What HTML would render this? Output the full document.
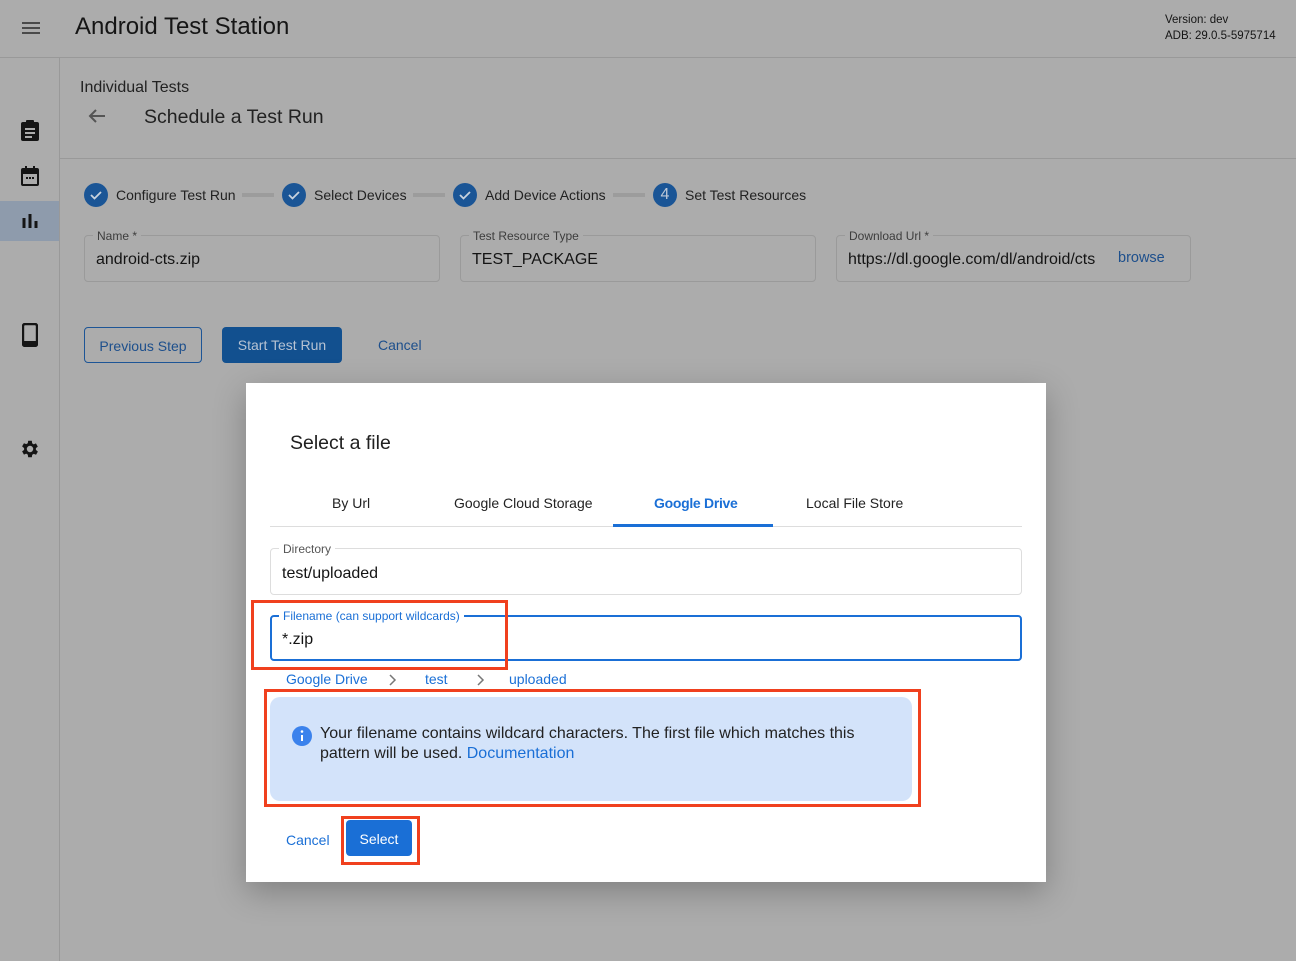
<!DOCTYPE html>
<html><head><meta charset="utf-8"><style>
*{box-sizing:border-box;margin:0;padding:0}
body{width:1296px;height:961px;background:#acacac;font-family:"Liberation Sans",Arial,sans-serif;position:relative;overflow:hidden;color:#141414}
.a{position:absolute;white-space:nowrap}
.fld{position:absolute;border:1px solid #9a9a9a;border-radius:4px}
.lbl{position:absolute;top:-7px;left:8px;background:#acacac;padding:0 4px;font-size:12px;color:#3d3d3d}
.circ{position:absolute;width:24px;height:24px;border-radius:50%;background:#1a5596;color:#bcc8d8;font-size:16px;text-align:center;line-height:24px}
.bar{position:absolute;height:4px;background:#9c9c9c;top:193px}
.stp{position:absolute;top:187px;font-size:14px;color:#222}
</style></head><body>
<div class="a" style="left:0;top:57px;width:1296px;height:1px;background:#999"></div>
<div class="a" style="left:59px;top:58px;width:1px;height:903px;background:#999"></div>
<svg class="a" style="left:21px;top:20px" width="20" height="16"><path d="M1 3h18M1 8h18M1 13h18" stroke="#4a4a4a" stroke-width="2"/></svg>
<div class="a" style="left:75px;top:13px;font-size:24px;color:#151515">Android Test Station</div>
<div class="a" style="left:1165px;top:12px;font-size:11.5px;line-height:16px;color:#151515">Version: dev<br>ADB: 29.0.5-5975714</div>
<svg class="a" style="left:21px;top:120px" width="18" height="21" viewBox="0 0 18 21"><rect x="0" y="2" width="18" height="19" rx="2" fill="#151515"/><rect x="5" y="0" width="8" height="5" rx="1" fill="#151515"/><path d="M4 9h10M4 13h10M4 17h7" stroke="#acacac" stroke-width="2"/></svg>
<svg class="a" style="left:21px;top:166px" width="18" height="20" viewBox="0 0 18 20"><rect x="1" y="3" width="16" height="16" rx="1" fill="none" stroke="#151515" stroke-width="2"/><path d="M1 4h16v4H1z" fill="#151515"/><path d="M5 0v4M13 0v4" stroke="#151515" stroke-width="2"/><path d="M5 12h2M8 12h2M11 12h2" stroke="#151515" stroke-width="2"/></svg>
<div class="a" style="left:0;top:201px;width:59px;height:40px;background:#8e9bac"></div>
<svg class="a" style="left:22px;top:212px" width="16" height="16"><path d="M2 6v10M8 2v14M14 9v7" stroke="#151515" stroke-width="3"/></svg>
<svg class="a" style="left:22px;top:323px" width="16" height="24"><rect x="1" y="1" width="14" height="22" rx="2" fill="none" stroke="#151515" stroke-width="2.4"/><rect x="2" y="18" width="12" height="4" fill="#151515"/></svg>
<svg class="a" style="left:19px;top:438px" width="22" height="22" viewBox="0 0 24 24"><path fill="#151515" d="M19.4 13a7.5 7.5 0 0 0 0-2l2.1-1.6-2-3.5-2.5 1a7 7 0 0 0-1.7-1L15 3h-4l-.4 2.7a7 7 0 0 0-1.7 1l-2.5-1-2 3.5L6.6 11a7.5 7.5 0 0 0 0 2l-2.2 1.6 2 3.5 2.5-1a7 7 0 0 0 1.7 1L11 21h4l.4-2.7a7 7 0 0 0 1.7-1l2.5 1 2-3.5zM13 15.5A3.5 3.5 0 1 1 13 8.5a3.5 3.5 0 0 1 0 7z" transform="translate(-1 0)"/></svg>
<div class="a" style="left:80px;top:79px;font-size:16px;color:#222">Individual Tests</div>
<svg class="a" style="left:88px;top:108px" width="18" height="16"><path d="M17 8H2M8 2L2 8l6 6" stroke="#555" stroke-width="2" fill="none"/></svg>
<div class="a" style="left:144px;top:106px;font-size:19.5px;color:#222">Schedule a Test Run</div>
<div class="a" style="left:60px;top:158px;width:1236px;height:1px;background:#999"></div>
<div class="circ" style="left:84px;top:183px"><svg width="24" height="24"><path d="M7 12l3.5 3.5L17 9" stroke="#c8d2de" stroke-width="1.8" fill="none"/></svg></div>
<div class="stp" style="left:116px">Configure Test Run</div>
<div class="bar" style="left:242px;width:32px"></div>
<div class="circ" style="left:282px;top:183px"><svg width="24" height="24"><path d="M7 12l3.5 3.5L17 9" stroke="#c8d2de" stroke-width="1.8" fill="none"/></svg></div>
<div class="stp" style="left:314px">Select Devices</div>
<div class="bar" style="left:413px;width:32px"></div>
<div class="circ" style="left:453px;top:183px"><svg width="24" height="24"><path d="M7 12l3.5 3.5L17 9" stroke="#c8d2de" stroke-width="1.8" fill="none"/></svg></div>
<div class="stp" style="left:485px">Add Device Actions</div>
<div class="bar" style="left:613px;width:32px"></div>
<div class="circ" style="left:653px;top:183px">4</div>
<div class="stp" style="left:685px">Set Test Resources</div>
<div class="fld" style="left:84px;top:235px;width:356px;height:47px"><span class="lbl">Name *</span><span class="a" style="left:11px;top:15px;font-size:16px">android-cts.zip</span></div>
<div class="fld" style="left:460px;top:235px;width:356px;height:47px"><span class="lbl">Test Resource Type</span><span class="a" style="left:11px;top:15px;font-size:16px">TEST_PACKAGE</span></div>
<div class="fld" style="left:836px;top:235px;width:355px;height:47px"><span class="lbl">Download Url *</span><span class="a" style="left:11px;top:15px;font-size:16px;width:253px;overflow:hidden">https://dl.google.com/dl/android/cts</span><span class="a" style="left:281px;top:14px;font-size:14.5px;color:#1d4f8c">browse</span></div>
<div class="a" style="left:84px;top:327px;width:118px;height:36px;border:1px solid #1d5596;border-radius:4px;color:#1d4f8c;font-size:14px;text-align:center;line-height:36px">Previous Step</div>
<div class="a" style="left:222px;top:327px;width:120px;height:36px;background:#12508f;border-radius:4px;color:#b7c3d3;font-size:14px;text-align:center;line-height:37px">Start Test Run</div>
<div class="a" style="left:378px;top:337px;font-size:14px;color:#1d4f8c">Cancel</div>
<div class="a" style="left:246px;top:383px;width:800px;height:499px;background:#fff;box-shadow:0 10px 30px rgba(0,0,0,.25)">
  <div class="a" style="left:44px;top:49px;font-size:19.5px;color:#202020">Select a file</div>
  <div class="a" style="left:86px;top:112px;font-size:14px;color:#222">By Url</div>
  <div class="a" style="left:208px;top:112px;font-size:14px;color:#222">Google Cloud Storage</div>
  <div class="a" style="left:408px;top:112px;font-size:14px;color:#1a6fd6;font-weight:bold;letter-spacing:-.3px">Google Drive</div>
  <div class="a" style="left:560px;top:112px;font-size:14px;color:#222">Local File Store</div>
  <div class="a" style="left:24px;top:143px;width:752px;height:1px;background:#ddd"></div>
  <div class="a" style="left:367px;top:141px;width:160px;height:3px;background:#1a6fd6"></div>
  <div class="a" style="left:24px;top:165px;width:752px;height:47px;border:1px solid #ddd;border-radius:4px">
    <span class="a" style="top:-7px;left:8px;background:#fff;padding:0 4px;font-size:12px;color:#555">Directory</span>
    <span class="a" style="left:11px;top:16px;font-size:16px">test/uploaded</span></div>
  <div class="a" style="left:24px;top:232px;width:752px;height:46px;border:2px solid #1a6fd6;border-radius:4px">
    <span class="a" style="top:-8px;left:7px;background:#fff;padding:0 4px;font-size:12px;color:#1a6fd6">Filename (can support wildcards)</span>
    <span class="a" style="left:10px;top:14px;font-size:16px">*.zip</span></div>
  <div class="a" style="left:5px;top:217px;width:257px;height:70px;border:3px solid #f0401e"></div>
  <div class="a" style="left:40px;top:288px;font-size:14px;color:#1a6fd6">Google Drive</div>
  <svg class="a" style="left:141px;top:290px" width="10" height="14"><path d="M3 2l5 5-5 5" stroke="#777" stroke-width="1.5" fill="none"/></svg>
  <div class="a" style="left:179px;top:288px;font-size:14px;color:#1a6fd6">test</div>
  <svg class="a" style="left:229px;top:290px" width="10" height="14"><path d="M3 2l5 5-5 5" stroke="#777" stroke-width="1.5" fill="none"/></svg>
  <div class="a" style="left:263px;top:288px;font-size:14px;color:#1a6fd6">uploaded</div>
  <div class="a" style="left:24px;top:314px;width:642px;height:104px;background:#d3e3fa;border-radius:10px"></div>
  <div class="a" style="left:18px;top:306px;width:657px;height:118px;border:3px solid #f0401e"></div>
  <svg class="a" style="left:45px;top:342px" width="22" height="22"><circle cx="11" cy="11" r="10" fill="#3b82ec"/><path d="M11 10v6" stroke="#fff" stroke-width="2"/><circle cx="11" cy="6.5" r="1.3" fill="#fff"/></svg>
  <div class="a" style="left:74px;top:341px;font-size:16px;line-height:20px;color:#222">Your filename contains wildcard characters. The first file which matches this<br>pattern will be used. <span style="color:#1a6fd6">Documentation</span></div>
  <div class="a" style="left:40px;top:449px;font-size:14px;color:#1a6fd6">Cancel</div>
  <div class="a" style="left:100px;top:437px;width:66px;height:36px;background:#1a6fd6;border-radius:4px;color:#fff;font-size:14px;text-align:center;line-height:38px">Select</div>
  <div class="a" style="left:95px;top:433px;width:79px;height:49px;border:3px solid #f0401e"></div>
</div>
</body></html>
